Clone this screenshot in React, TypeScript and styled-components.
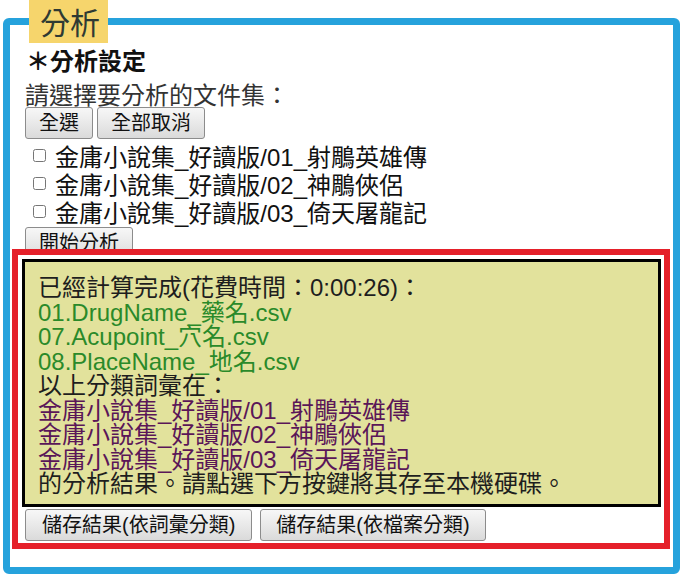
import React from "react";
import styled, { createGlobalStyle } from "styled-components";

const Global = createGlobalStyle`
  html, body { margin: 0; padding: 0; background: #ffffff; }
  body { font-family: "Liberation Sans", "Noto Sans CJK TC", sans-serif; color: #111; }
`;

const Page = styled.div`
  padding: 0 0 0 3px;
  width: 677px;
`;

const Panel = styled.fieldset`
  margin: 0;
  padding: 0 3px 18px 2px;
  border: 7px solid #26a2dc;
  border-radius: 6px;
  min-width: 0;
`;

const Legend = styled.legend`
  margin-left: 17px;
  padding: 0 8px 0 11px;
  height: 43px;
  line-height: 43px;
  background: #f6d56c;
  color: #2f3a33;
  font-size: 30px;
  font-family: "Noto Sans CJK TC", sans-serif;
`;

const Setup = styled.div`
  padding: 5px 0 0 13px;
  display: flex;
  flex-direction: column;
  align-items: flex-start;
`;

const Title = styled.div`
  font-size: 24px;
  line-height: 28px;
  font-weight: bold;
  color: #111;
  margin-left: 1px;
`;

const Prompt = styled.div`
  font-size: 24px;
  line-height: 28px;
  color: #333;
  margin-top: 6px;
  height: 25px;
  overflow: visible;
`;

const ButtonRow = styled.div`
  display: flex;
  gap: 4px;
`;

const Button = styled.button<{ $pad?: number }>`
  height: 32px;
  padding: 0 ${(p) => p.$pad ?? 13}px;
  font-family: "Liberation Sans", "Noto Sans CJK TC", sans-serif;
  font-size: 20px;
  color: #111;
  background: linear-gradient(#f7f7f7, #e9e9e9 50%, #dadada);
  border: 1px solid #8c8c8c;
  border-radius: 3px;
  line-height: 28px;
  cursor: pointer;
`;

const FileList = styled.div`
  margin-top: 2px;
  display: flex;
  flex-direction: column;
`;

const FileRow = styled.label`
  display: flex;
  align-items: center;
  height: 28px;
  font-size: 24px;
  color: #111;
`;

const Check = styled.input`
  width: 13px;
  height: 13px;
  margin: 0 9px 0 8px;
`;

const StartButton = styled(Button)`
  margin-top: 2px;
`;

const Annotation = styled.div`
  position: relative;
  margin-top: -10px;
  border: 6px solid #e5202a;
  background: #ffffff;
  padding: 4px 3px 2px 4px;
`;

const Result = styled.div`
  border: 3px solid #000;
  background: #e2e29c;
  padding: 14px 12px 7px 13px;
  font-size: 24px;
  line-height: 24.5px;
`;

const Line = styled.div<{ $tone?: "plain" | "file" | "doc" }>`
  color: ${(p) =>
    p.$tone === "file" ? "#2a8a2a" : p.$tone === "doc" ? "#5a1658" : "#1e1e1e"};
  white-space: nowrap;
`;

const SaveRow = styled.div`
  display: flex;
  gap: 8px;
  margin: 2px 0 0 3px;
`;

const docs = [
  "金庸小說集_好讀版/01_射鵰英雄傳",
  "金庸小說集_好讀版/02_神鵰俠侶",
  "金庸小說集_好讀版/03_倚天屠龍記",
];

const files = [
  "01.DrugName_藥名.csv",
  "07.Acupoint_穴名.csv",
  "08.PlaceName_地名.csv",
];

export default function App() {
  return (
    <Page>
      <Global />
      <Panel>
        <Legend>分析</Legend>
        <Setup>
          <Title>＊分析設定</Title>
          <Prompt>請選擇要分析的文件集：</Prompt>
          <ButtonRow>
            <Button>全選</Button>
            <Button>全部取消</Button>
          </ButtonRow>
          <FileList>
            {docs.map((d) => (
              <FileRow key={d}>
                <Check type="checkbox" />
                {d}
              </FileRow>
            ))}
          </FileList>
          <StartButton>開始分析</StartButton>
        </Setup>
        <Annotation>
          <Result>
            <Line>已經計算完成(花費時間：0:00:26)：</Line>
            {files.map((f) => (
              <Line key={f} $tone="file">
                {f}
              </Line>
            ))}
            <Line>以上分類詞彙在：</Line>
            {docs.map((d) => (
              <Line key={d} $tone="doc">
                {d}
              </Line>
            ))}
            <Line>的分析結果。請點選下方按鍵將其存至本機硬碟。</Line>
          </Result>
          <SaveRow>
            <Button $pad={16}>儲存結果(依詞彙分類)</Button>
            <Button $pad={15}>儲存結果(依檔案分類)</Button>
          </SaveRow>
        </Annotation>
      </Panel>
    </Page>
  );
}
